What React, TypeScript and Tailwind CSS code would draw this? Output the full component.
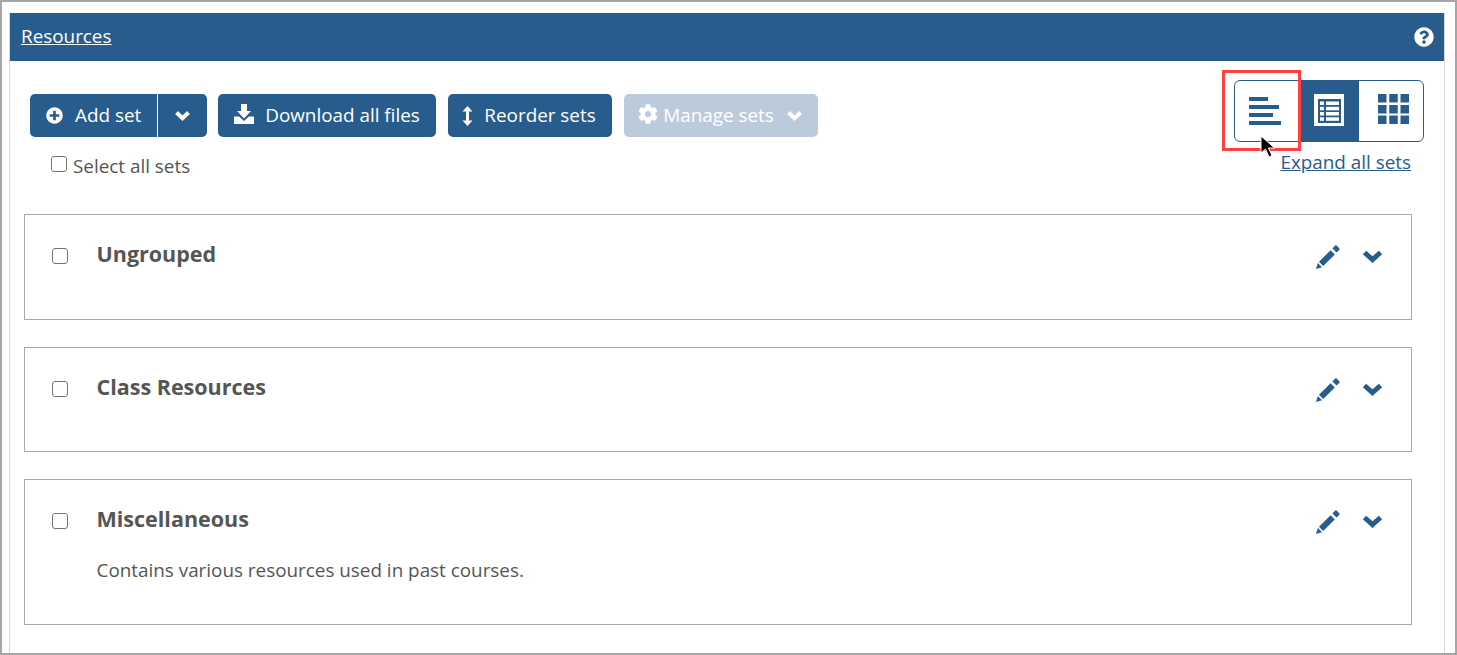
import type { ReactNode } from "react";
import { FaPlusCircle, FaCog, FaQuestionCircle } from "react-icons/fa";

function ReorderIcon() {
  return (
    <svg width="11" height="20" viewBox="0 0 11 20" fill="currentColor">
      <path d="M5.5 0 L10.5 5.5 H7 V14.5 H10.5 L5.5 20 L0.5 14.5 H4 V5.5 H0.5 Z" />
    </svg>
  );
}

function DownloadIcon() {
  return (
    <svg width="20" height="20" viewBox="0 0 20 20" fill="currentColor" className="-mt-[3px]">
      <path d="M7 0 H13 V7 H17 L10 14.5 L3 7 H7 Z" />
      <path d="M0 12.5 H5 L10 17 L15 12.5 H20 V20 H0 Z" />
    </svg>
  );
}

function SmallChevron() {
  return (
    <svg width="15" height="10" viewBox="0 0 15 10" fill="none" stroke="currentColor" strokeWidth="4">
      <polyline points="1.5,1.5 7.5,7.2 13.5,1.5" />
    </svg>
  );
}

function LargeChevron() {
  return (
    <svg width="21" height="13" viewBox="0 0 21 13" fill="none" stroke="currentColor" strokeWidth="5">
      <polyline points="2.5,2.5 10.5,9.6 18.5,2.5" />
    </svg>
  );
}

function Pencil() {
  return (
    <svg width="24" height="24" viewBox="0 0 24 24" fill="currentColor">
      <path d="M0 24 L1.8 18 L6 22.2 Z" />
      <path d="M3 16.8 L14.6 5.2 L18.8 9.4 L7.2 21 Z" />
      <path d="M16.4 3.4 L19.2 0.6 Q19.9 0 20.6 0.6 L23.4 3.4 Q24 4.1 23.4 4.8 L20.6 7.6 Z" />
    </svg>
  );
}

function Btn({ w, icon, label }: { w: string; icon: ReactNode; label: string }) {
  return (
    <button className={`${w} gap-[11px] h-[43px] rounded-[5px] bg-[#285c8c] text-white flex items-center justify-center text-[18.88px]`}>
      {icon}
      <span>{label}</span>
    </button>
  );
}

function Check() {
  return <span className="block w-[16px] h-[16px] rounded-[3px] border border-[#767676] bg-white shrink-0" />;
}

function SetCard({ title, desc, h }: { title: string; desc?: string; h: string }) {
  return (
    <section className={`${h} w-[1388px] border border-[#a9a9a9] mb-[27px] flex pl-[27px] pr-[28px] pt-[24px]`}>
      <div className="pt-[9px]"><Check /></div>
      <div className="ml-[29px] flex-1 -translate-x-[0.5px]">
        <h3 className="text-[21.5px] leading-[30px] font-bold text-[#555]">{title}</h3>
        {desc && <p className="mt-[24px] text-[18.88px] leading-[24px] text-[#555]">{desc}</p>}
      </div>
      <div className="flex gap-[22px] pt-[6px] text-[#285c8c] h-fit items-start">
        <Pencil />
        <span className="block pt-[5px]"><LargeChevron /></span>
      </div>
    </section>
  );
}

export default function App() {
  return (
    <div className="w-[1457px] h-[655px] overflow-hidden bg-white border-2 border-[#a6a6a6] pt-[11px] pl-[7px] pr-[10px] text-[#555]" style={{ fontFamily: '"Open Sans", sans-serif' }}>
      <div className="h-[700px] border-x border-[#d9d9d9]">
        <header className="h-[48px] bg-[#285c8c] flex items-center justify-between pl-[11px] pr-[10px] text-white">
          <a className="underline text-[18.88px] leading-[26px] -mt-[2px]">Resources</a>
          <FaQuestionCircle className="w-[20px] h-[20px]" />
        </header>

        <div className="h-[153px] flex justify-between pl-[20px] pr-[20px] pt-[19px]">
          <div className="pt-[14px]">
            <div className="flex gap-[11px]">
              <div className="flex h-[43px] w-[177px] rounded-[5px] bg-[#285c8c] text-white text-[18.88px]">
                <button className="w-[128px] flex items-center gap-[12px] pl-[16px] border-r border-white">
                  <FaPlusCircle className="w-[17px] h-[17px]" />
                  <span>Add set</span>
                </button>
                <button className="flex-1 flex items-center justify-center">
                  <SmallChevron />
                </button>
              </div>
              <Btn w="w-[218px]" icon={<DownloadIcon />} label="Download all files" />
              <div className="ml-[1px]">
                <Btn w="w-[164px] pr-[2px]" icon={<ReorderIcon />} label="Reorder sets" />
              </div>
              <div className="ml-[1px] flex h-[43px] w-[194px] pr-[2px] rounded-[5px] bg-[#bccbdb] text-white items-center justify-center text-[18.88px]">
                <span className="-mt-[3px]"><FaCog className="w-[20px] h-[20px]" /></span>
                <span className="ml-[5px]">Manage sets</span>
                <span className="ml-[13px]"><SmallChevron /></span>
              </div>
            </div>
            <label className="flex items-center gap-[6px] ml-[21px] mt-[17px] text-[18.88px] leading-[24px]">
              <span className="block w-[16px] h-[16px] rounded-[3px] border border-[#767676] bg-white -mt-[4px]" />
              Select all sets
            </label>
          </div>

          <div className="flex flex-col items-end">
            <div className="relative flex w-[190px] h-[62px] rounded-[6px] border border-[#285c8c]">
              <div className="w-[65px] flex items-center justify-center pr-[4px]">
                <svg width="33" height="30" viewBox="0 0 33 30" fill="#285c8c">
                  <rect x="0" y="1" width="19" height="4" />
                  <rect x="0" y="9" width="30" height="4" />
                  <rect x="0" y="17" width="24" height="4" />
                  <rect x="0" y="25" width="32" height="4" />
                </svg>
              </div>
              <div className="w-[59px] bg-[#285c8c] flex items-center justify-center pr-[2px] pb-[2px]">
                <svg width="30" height="32" viewBox="0 0 30 32">
                  <rect x="0" y="0" width="30" height="32" fill="#fff" />
                  <rect x="4" y="5" width="23" height="24" fill="#285c8c" />
                  <g fill="#fff">
                    <rect x="6" y="7.5" width="4" height="3.5" />
                    <rect x="12" y="7.5" width="13" height="3.5" />
                    <rect x="6" y="12.8" width="4" height="3.5" />
                    <rect x="12" y="12.8" width="13" height="3.5" />
                    <rect x="6" y="18" width="4" height="3.5" />
                    <rect x="12" y="18" width="13" height="3.5" />
                    <rect x="6" y="23.3" width="4" height="3.5" />
                    <rect x="12" y="23.3" width="13" height="3.5" />
                  </g>
                </svg>
              </div>
              <div className="flex-1 flex items-center justify-center pl-[4px] pb-[4px]">
                <svg width="31" height="30" viewBox="0 0 31 30" fill="#285c8c">
                  <rect x="0" y="0" width="8.5" height="8.5" />
                  <rect x="11.25" y="0" width="8.5" height="8.5" />
                  <rect x="22.5" y="0" width="8.5" height="8.5" />
                  <rect x="0" y="11" width="8.5" height="8.5" />
                  <rect x="11.25" y="11" width="8.5" height="8.5" />
                  <rect x="22.5" y="11" width="8.5" height="8.5" />
                  <rect x="0" y="21.5" width="8.5" height="8.5" />
                  <rect x="11.25" y="21.5" width="8.5" height="8.5" />
                  <rect x="22.5" y="21.5" width="8.5" height="8.5" />
                </svg>
              </div>
              <div className="absolute left-[-13px] top-[-11px] w-[79px] h-[81px] border-[3px] border-[#ff4040]" />
              <svg className="absolute left-[25px] top-[54px]" width="18" height="24" viewBox="0 0 18 24">
                <path d="M1 1 L1 18 L5.5 14 L9 22 L12 20.5 L8.5 13 L14.5 13 Z" fill="#000" stroke="#fff" strokeWidth="1" />
              </svg>
            </div>
            <a className="mr-[13px] mt-[8px] underline text-[#285c8c] text-[18.88px] leading-[24px]">Expand all sets</a>
          </div>
        </div>

        <div className="pl-[14px]">
          <SetCard h="h-[106px]" title="Ungrouped" />
          <SetCard h="h-[105px]" title="Class Resources" />
          <SetCard h="h-[146px]" title="Miscellaneous" desc="Contains various resources used in past courses." />
        </div>
      </div>
    </div>
  );
}
